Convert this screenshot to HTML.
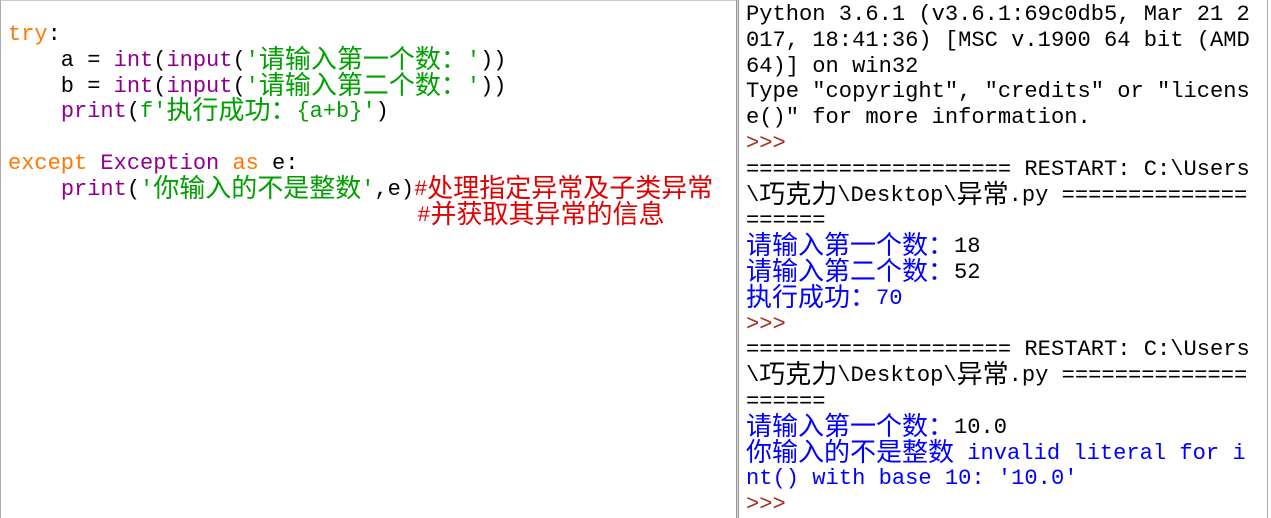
<!DOCTYPE html>
<html><head><meta charset="utf-8"><style>
body{margin:0;width:1271px;height:518px;background:#fff;overflow:hidden;position:relative;font-family:"Liberation Mono","Noto Sans CJK SC",monospace}
#l{position:absolute;left:0;top:0;width:736px;height:518px;border-left:1px solid #aaa;border-top:1px solid #ccc;box-sizing:border-box}
#dv{position:absolute;left:736px;top:0;width:3px;height:518px;background:#d8d8d8;border-left:1px solid #999;border-right:1px solid #999;box-sizing:border-box}
#r{position:absolute;left:739px;top:0;width:528px;height:518px;border-right:1px solid #aaa}
.lc{position:absolute;left:7px;top:21px;font-size:22px;line-height:25.8px;white-space:pre}
.rc{position:absolute;left:7px;top:2px;font-size:22.1px;line-height:25.8px;white-space:pre;color:#000}
.c{font-family:"Noto Sans CJK SC",sans-serif;font-size:26px;line-height:10px;position:relative;top:2px}
.o{color:#ff7700}.p{color:#900090}.g{color:#00a000}.rd{color:#e00000}.b{color:#0000ff}.pr{color:#a03020}
</style></head><body>
<div id="l"><div class="lc"><span class="o">try</span>:
    a = <span class="p">int</span>(<span class="p">input</span>(<span class="g">'<span class="c">请输入第一个数：</span>'</span>))
    b = <span class="p">int</span>(<span class="p">input</span>(<span class="g">'<span class="c">请输入第二个数：</span>'</span>))
    <span class="p">print</span>(<span class="g">f'<span class="c">执行成功：</span>{a+b}'</span>)

<span class="o">except</span> <span class="p">Exception</span> <span class="o">as</span> e:
    <span class="p">print</span>(<span class="g">'<span class="c">你输入的不是整数</span>'</span>,e)<span class="rd">#<span class="c">处理指定异常及子类异常</span></span>
                               <span class="rd">#<span class="c">并获取其异常的信息</span></span></div></div>
<div id="dv"></div>
<div id="r"><div class="rc">Python 3.6.1 (v3.6.1:69c0db5, Mar 21 2
017, 18:41:36) [MSC v.1900 64 bit (AMD
64)] on win32
Type "copyright", "credits" or "licens
e()" for more information.
<span class="pr">&gt;&gt;&gt;</span>
==================== RESTART: C:\Users
\<span class="c">巧克力</span>\Desktop\<span class="c">异常</span>.py ==============
======
<span class="b"><span class="c">请输入第一个数：</span></span>18
<span class="b"><span class="c">请输入第二个数：</span></span>52
<span class="b"><span class="c">执行成功：</span>70</span>
<span class="pr">&gt;&gt;&gt;</span>
==================== RESTART: C:\Users
\<span class="c">巧克力</span>\Desktop\<span class="c">异常</span>.py ==============
======
<span class="b"><span class="c">请输入第一个数：</span></span>10.0
<span class="b"><span class="c">你输入的不是整数</span> invalid literal for i
nt() with base 10: '10.0'</span>
<span class="pr">&gt;&gt;&gt;</span></div></div>
</body></html>
